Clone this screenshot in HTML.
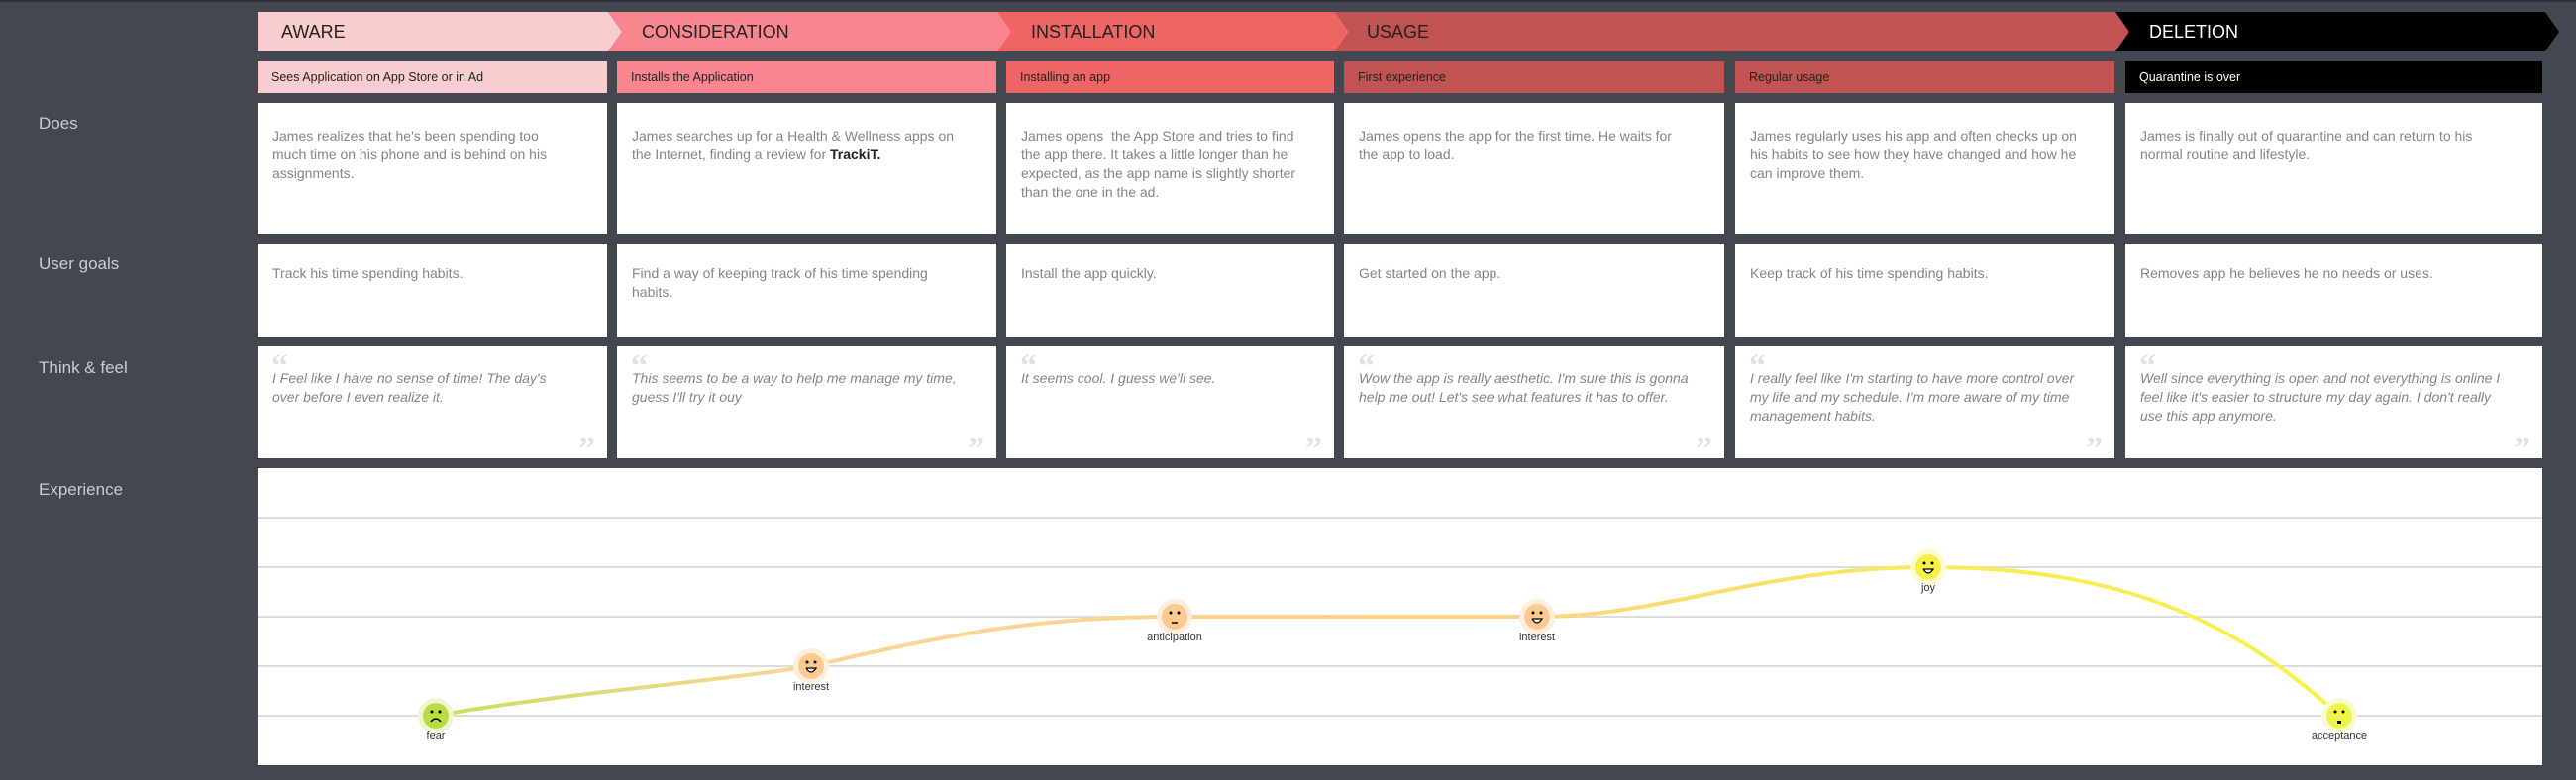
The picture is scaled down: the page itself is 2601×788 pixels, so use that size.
<!DOCTYPE html>
<html><head><meta charset="utf-8"><style>
*{margin:0;padding:0;box-sizing:border-box}
body{width:2601px;height:788px;background:#434850;position:relative;overflow:hidden;font-family:"Liberation Sans",sans-serif}
.a{position:absolute}
.hd{position:absolute;top:12px;height:40px;font-size:18px;line-height:40px;color:#222;padding-left:24px}
.sh{position:absolute;top:62px;height:32px;font-size:12.5px;line-height:32px;color:#222;padding-left:14px}
.card{position:absolute;background:#fff;color:#858585;font-size:14px;line-height:19px;padding:0 34px 0 15px}
.lab{position:absolute;left:39px;color:#c9ccd1;font-size:17px}
.q{font-style:italic}
.qo,.qc{position:absolute;color:#dfe1e6;font-size:34px;font-family:"Liberation Serif",serif;font-weight:bold;font-style:normal;line-height:34px}
.qo{left:14px;top:4px}.qc{right:12px;bottom:-8px}
</style></head><body>
<div class="a" style="left:0;top:0;width:2601px;height:2px;background:#2e3137"></div>
<div class="hd" style="left:260px;width:368px;background:#f9cdd0;clip-path:polygon(0 0,354px 0,100% 50%,354px 100%,0 100%)">AWARE</div>
<div class="hd" style="left:614px;width:408px;background:#f9858f;padding-left:34px;clip-path:polygon(0 0,394px 0,100% 50%,394px 100%,0 100%,14px 50%)">CONSIDERATION</div>
<div class="hd" style="left:1007px;width:355px;background:#ed6564;padding-left:34px;clip-path:polygon(0 0,341px 0,100% 50%,341px 100%,0 100%,14px 50%)">INSTALLATION</div>
<div class="hd" style="left:1348px;width:802px;background:#c15353;padding-left:32px;clip-path:polygon(0 0,788px 0,100% 50%,788px 100%,0 100%,14px 50%)">USAGE</div>
<div class="hd" style="left:2136px;width:448px;background:#000;color:#fff;padding-left:34px;clip-path:polygon(0 0,434px 0,100% 50%,434px 100%,0 100%,14px 50%)">DELETION</div>

<div class="sh" style="left:260px;width:353px;background:#f9cdd0">Sees Application on App Store or in Ad</div>
<div class="sh" style="left:623px;width:383px;background:#f9858f">Installs the Application</div>
<div class="sh" style="left:1016px;width:331px;background:#ed6564">Installing an app</div>
<div class="sh" style="left:1357px;width:384px;background:#c15353">First experience</div>
<div class="sh" style="left:1752px;width:383px;background:#c15353">Regular usage</div>
<div class="sh" style="left:2146px;width:421px;background:#000;color:#fff">Quarantine is over</div>

<div class="lab" style="top:115px">Does</div>
<div class="lab" style="top:257px">User goals</div>
<div class="lab" style="top:362px">Think &amp; feel</div>
<div class="lab" style="top:485px">Experience</div>

<div class="card" style="left:260px;top:104px;width:353px;height:132px;padding-top:24px">James realizes that he's been spending too much time on his phone and is behind on his assignments.</div>
<div class="card" style="left:623px;top:104px;width:383px;height:132px;padding-top:24px">James searches up for a Health &amp; Wellness apps on the Internet, finding a review for <b style="color:#222">TrackiT.</b></div>
<div class="card" style="left:1016px;top:104px;width:331px;height:132px;padding-top:24px">James opens &nbsp;the App Store and tries to find the app there. It takes a little longer than he expected, as the app name is slightly shorter than the one in the ad.</div>
<div class="card" style="left:1357px;top:104px;width:384px;height:132px;padding-top:24px">James opens the app for the first time. He waits for the app to load.</div>
<div class="card" style="left:1752px;top:104px;width:383px;height:132px;padding-top:24px">James regularly uses his app and often checks up on his habits to see how they have changed and how he can improve them.</div>
<div class="card" style="left:2146px;top:104px;width:421px;height:132px;padding-top:24px">James is finally out of quarantine and can return to his normal routine and lifestyle.</div>

<div class="card" style="left:260px;top:246px;width:353px;height:94px;padding-top:21px">Track his time spending habits.</div>
<div class="card" style="left:623px;top:246px;width:383px;height:94px;padding-top:21px">Find a way of keeping track of his time spending habits.</div>
<div class="card" style="left:1016px;top:246px;width:331px;height:94px;padding-top:21px">Install the app quickly.</div>
<div class="card" style="left:1357px;top:246px;width:384px;height:94px;padding-top:21px">Get started on the app.</div>
<div class="card" style="left:1752px;top:246px;width:383px;height:94px;padding-top:21px">Keep track of his time spending habits.</div>
<div class="card" style="left:2146px;top:246px;width:421px;height:94px;padding-top:21px">Removes app he believes he no needs or uses.</div>

<div class="card q" style="left:260px;top:350px;width:353px;height:113px;padding-top:23px"><span class="qo">“</span>I Feel like I have no sense of time! The day's over before I even realize it.<span class="qc">”</span></div>
<div class="card q" style="left:623px;top:350px;width:383px;height:113px;padding-top:23px"><span class="qo">“</span>This seems to be a way to help me manage my time, guess I'll try it ouy<span class="qc">”</span></div>
<div class="card q" style="left:1016px;top:350px;width:331px;height:113px;padding-top:23px"><span class="qo">“</span>It seems cool. I guess we'll see.<span class="qc">”</span></div>
<div class="card q" style="left:1357px;top:350px;width:384px;height:113px;padding-top:23px"><span class="qo">“</span>Wow the app is really aesthetic. I'm sure this is gonna help me out! Let's see what features it has to offer.<span class="qc">”</span></div>
<div class="card q" style="left:1752px;top:350px;width:383px;height:113px;padding-top:23px"><span class="qo">“</span>I really feel like I'm starting to have more control over my life and my schedule. I'm more aware of my time management habits.<span class="qc">”</span></div>
<div class="card q" style="left:2146px;top:350px;width:421px;height:113px;padding-top:23px"><span class="qo">“</span>Well since everything is open and not everything is online I feel like it's easier to structure my day again. I don't really use this app anymore.<span class="qc">”</span></div>

<svg class="a" style="left:260px;top:473px" width="2307" height="300" viewBox="260 473 2307 300">
<rect x="260" y="473" width="2307" height="300" fill="#fff"/>
<g stroke="#dcdcdc" stroke-width="2">
<line x1="260" y1="523" x2="2567" y2="523"/><line x1="260" y1="573" x2="2567" y2="573"/>
<line x1="260" y1="623" x2="2567" y2="623"/><line x1="260" y1="673" x2="2567" y2="673"/>
<line x1="260" y1="723" x2="2567" y2="723"/></g>
<defs><linearGradient id="g" x1="440" y1="0" x2="2362" y2="0" gradientUnits="userSpaceOnUse">
<stop offset="0" stop-color="#c9df62"/><stop offset="0.2" stop-color="#fdd59a"/><stop offset="0.55" stop-color="#fdd283"/><stop offset="0.8" stop-color="#f9ec5a"/><stop offset="1" stop-color="#f6f24a"/></linearGradient></defs>
<path d="M440 723 C570 700 710 690 819 673 C960 640 1050 623 1186 623 L1552 623 C1680 623 1780 573 1947 573 C2130 573 2250 620 2362 723" fill="none" stroke="url(#g)" stroke-width="4"/>
<g font-family="Liberation Sans" font-size="11" fill="#333" text-anchor="middle">
<g><circle cx="440" cy="723" r="18" fill="#eef5d0"/><circle cx="440" cy="723" r="13" fill="#b7dc45"/><circle cx="436" cy="719" r="1.5" fill="#000"/><circle cx="444" cy="719" r="1.5" fill="#000"/><path d="M435 729 Q440 723 445 729" stroke="#000" fill="none" stroke-width="1.5"/><text x="440" y="747">fear</text></g>
<g><circle cx="819" cy="673" r="18" fill="#fdeedd"/><circle cx="819" cy="673" r="13" fill="#fcc98e"/><circle cx="815" cy="669" r="1.5" fill="#000"/><circle cx="823" cy="669" r="1.5" fill="#000"/><path d="M814 675 L824 675 Q819 683 814 675" stroke="#000" fill="#fff" stroke-width="1.2"/><text x="819" y="697">interest</text></g>
<g><circle cx="1186" cy="623" r="18" fill="#fdeedd"/><circle cx="1186" cy="623" r="13" fill="#fcc98e"/><circle cx="1182" cy="619" r="1.5" fill="#000"/><circle cx="1190" cy="619" r="1.5" fill="#000"/><line x1="1183" y1="629" x2="1189" y2="629" stroke="#000" stroke-width="1.5"/><text x="1186" y="647">anticipation</text></g>
<g><circle cx="1552" cy="623" r="18" fill="#fdeedd"/><circle cx="1552" cy="623" r="13" fill="#fcc98e"/><circle cx="1548" cy="619" r="1.5" fill="#000"/><circle cx="1556" cy="619" r="1.5" fill="#000"/><path d="M1547 625 L1557 625 Q1552 633 1547 625" stroke="#000" fill="#fff" stroke-width="1.2"/><text x="1552" y="647">interest</text></g>
<g><circle cx="1947" cy="573" r="18" fill="#fdfbd0"/><circle cx="1947" cy="573" r="13" fill="#f8f04a"/><circle cx="1943" cy="569" r="1.5" fill="#000"/><circle cx="1951" cy="569" r="1.5" fill="#000"/><path d="M1942 575 L1952 575 Q1947 583 1942 575" stroke="#000" fill="#fff" stroke-width="1.2"/><text x="1947" y="597">joy</text></g>
<g><circle cx="2362" cy="723" r="18" fill="#f6fbd0"/><circle cx="2362" cy="723" r="13" fill="#eef54a"/><circle cx="2358" cy="719" r="1.5" fill="#000"/><circle cx="2366" cy="719" r="1.5" fill="#000"/><rect x="2360" y="728" width="4" height="3" fill="#000"/><text x="2362" y="747">acceptance</text></g>
</g>
</svg>
</body></html>
